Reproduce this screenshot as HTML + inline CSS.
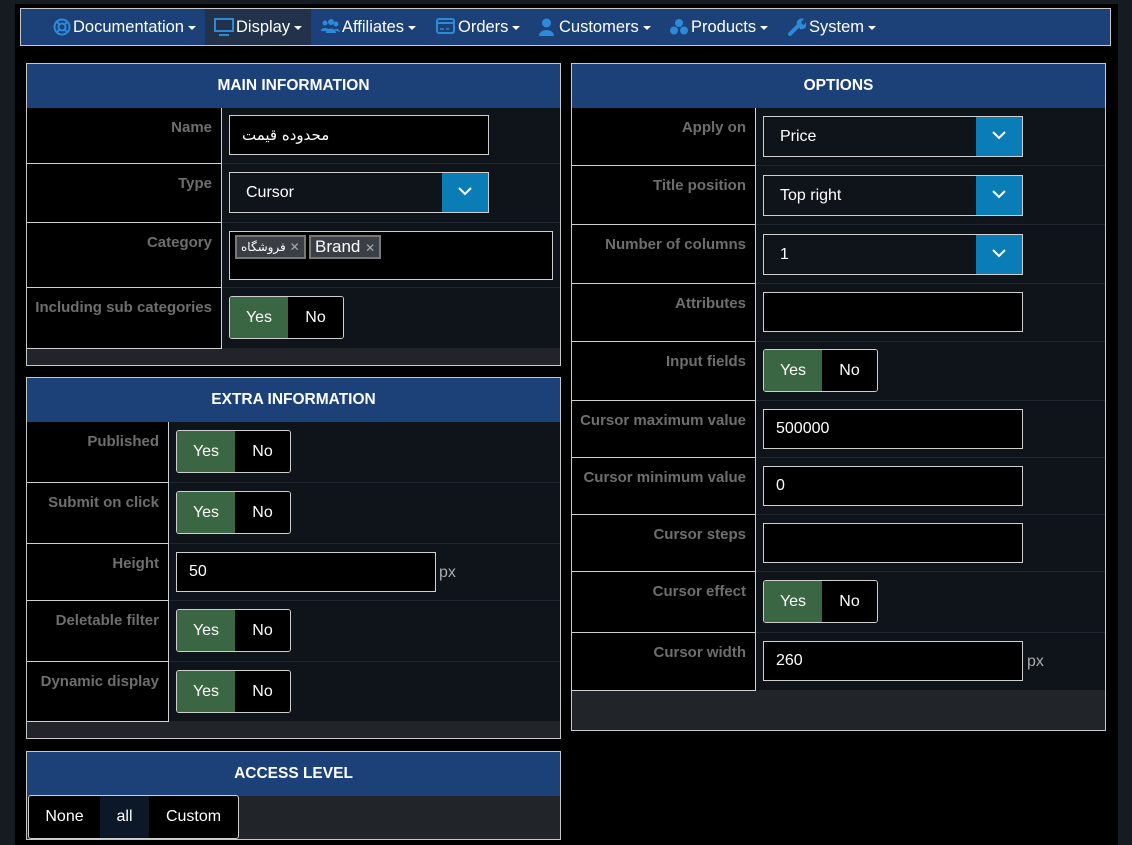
<!DOCTYPE html>
<html><head><meta charset="utf-8"><style>
*{box-sizing:border-box;margin:0;padding:0}
body{width:1132px;height:845px;background:#000;font-family:"Liberation Sans","Noto Sans CJK SC",sans-serif;color:#fff;position:relative;overflow:hidden;font-size:16px}
.a{position:absolute}
.strip{background:#161a21}
.nav{left:20px;top:8px;width:1091px;height:38px;background:#1b4178;border:1px solid #c8c8c8}
.ni{position:absolute;top:0;height:36px;line-height:36px;font-size:16.5px;white-space:nowrap}
.car{display:inline-block;width:0;height:0;border-left:4px solid transparent;border-right:4px solid transparent;border-top:4px solid #fff;vertical-align:middle;margin-left:4px}
.ic{position:absolute;top:9px}
.panel{border:1px solid #c8c8c8;background:#212429}
.hd{position:absolute;left:0;right:0;top:0;height:44px;background:#1b4178;text-align:center;line-height:44px;font-weight:bold;font-size:15.5px}
.lab{position:absolute;left:0;background:#000;border-right:1px solid #d0d0d0;border-bottom:1px solid #d0d0d0;color:#6e6e6e;font-weight:bold;font-size:15px;text-align:right;padding:11px 9px 0 0}
.val{position:absolute;right:0;background:#0f141b;border-bottom:1px solid #1f2630}
.in{position:absolute;background:#000;border:1px solid #cfcfcf;height:40px;line-height:38px;padding-left:12px;font-size:16px}
.sel{position:absolute;background:#0f141b;border:1px solid #cfcfcf;height:41px;line-height:39px;padding-left:16px;font-size:16px}
.sel .b{position:absolute;right:0;top:0;width:46px;height:39px;background:#0a7db6}
.sel .b svg{position:absolute;left:16px;top:14px}
.tg{position:absolute;height:43px;border:1px solid #cfcfcf;border-radius:3px;overflow:hidden;display:flex;width:115px}
.tg span{display:block;height:41px;line-height:41px;text-align:center;font-size:16px}
.tg .y{width:58px;background:#3a6644}
.tg .n{width:55px;background:#000}
.px{position:absolute;color:#aaa;font-size:16px}
</style></head><body>
<div class="a strip" style="left:0;top:0;width:15px;height:845px"></div>
<div class="a strip" style="left:1118px;top:0;width:14px;height:845px"></div>
<div class="a strip" style="left:0;top:0;width:1132px;height:4px"></div>

<div class="a nav">
 <div class="ni" style="left:184px;width:106px;background:#22324a"></div>
 <svg class="ic" style="left:32px" width="18" height="18" viewBox="0 0 18 18"><circle cx="9" cy="9" r="7.5" fill="none" stroke="#2d8ad8" stroke-width="2"/><circle cx="9" cy="9" r="3.5" fill="none" stroke="#2d8ad8" stroke-width="2"/><path d="M4 4l3 3M14 4l-3 3M4 14l3-3M14 14l-3-3" stroke="#2d8ad8" stroke-width="2"/></svg>
 <div class="ni" style="left:52px">Documentation<span class="car"></span></div>
 <svg class="ic" style="left:193px" width="20" height="18" viewBox="0 0 20 18"><rect x="1" y="1" width="18" height="12" fill="none" stroke="#2d8ad8" stroke-width="2"/><path d="M5 17h10" stroke="#2d8ad8" stroke-width="2"/></svg>
 <div class="ni" style="left:215px">Display<span class="car"></span></div>
 <svg class="ic" style="left:299px" width="21" height="18" viewBox="0 0 21 18"><circle cx="5" cy="5" r="2.5" fill="#2d8ad8"/><circle cx="11" cy="4" r="3" fill="#2d8ad8"/><circle cx="16" cy="6" r="2.5" fill="#2d8ad8"/><path d="M1 13c0-4 8-4 8 0zM6 15c0-6 10-6 10 0zM14 12c2-2 6-1 6 2z" fill="#2d8ad8"/></svg>
 <div class="ni" style="left:321px">Affiliates<span class="car"></span></div>
 <svg class="ic" style="left:415px" width="19" height="16" viewBox="0 0 19 16"><rect x="1" y="1" width="17" height="14" rx="2" fill="none" stroke="#2d8ad8" stroke-width="2"/><path d="M1 5h17" stroke="#2d8ad8" stroke-width="2"/><path d="M4 11h4M10 11h3" stroke="#2d8ad8" stroke-width="1.5"/></svg>
 <div class="ni" style="left:437px">Orders<span class="car"></span></div>
 <svg class="ic" style="left:518px" width="15" height="18" viewBox="0 0 15 18"><circle cx="7.5" cy="5" r="4.5" fill="#2d8ad8"/><path d="M0 18c0-8 15-8 15 0z" fill="#2d8ad8"/></svg>
 <div class="ni" style="left:538px">Customers<span class="car"></span></div>
 <svg class="ic" style="left:648px" width="20" height="18" viewBox="0 0 20 18"><circle cx="10" cy="5" r="4" fill="#2d8ad8"/><circle cx="5" cy="12.5" r="4" fill="#2d8ad8"/><circle cx="15" cy="12.5" r="4" fill="#2d8ad8"/></svg>
 <div class="ni" style="left:670px">Products<span class="car"></span></div>
 <svg class="ic" style="left:767px" width="18" height="18" viewBox="0 0 18 18"><path d="M2 16l8-8" stroke="#2d8ad8" stroke-width="4" stroke-linecap="round"/><path d="M9 7a5 5 0 0 1 7-6l-3 3 1 2 2 1 2-3a5 5 0 0 1-6 7z" fill="#2d8ad8"/></svg>
 <div class="ni" style="left:788px">System<span class="car"></span></div>
</div>

<!-- MAIN INFORMATION -->
<div class="a panel" style="left:26px;top:63px;width:535px;height:303px">
 <div class="hd">MAIN INFORMATION</div>
 <div class="lab" style="top:44px;width:195px;height:56px">Name</div><div class="val" style="top:44px;left:195px;height:56px"></div>
 <div class="lab" style="top:100px;width:195px;height:59px">Type</div><div class="val" style="top:100px;left:195px;height:59px"></div>
 <div class="lab" style="top:159px;width:195px;height:65px">Category</div><div class="val" style="top:159px;left:195px;height:65px"></div>
 <div class="lab" style="top:224px;width:195px;height:61px">Including sub categories</div><div class="val" style="top:224px;left:195px;height:60px;border:none"></div>
 <div class="in" style="left:202px;top:51px;width:260px;font-family:'DejaVu Sans',sans-serif;font-size:15px">محدوده قیمت</div>
 <div class="sel" style="left:202px;top:108px;width:260px">Cursor<div class="b"><svg width="14" height="9"><path d="M1 1l6 6 6-6" stroke="#fff" stroke-width="2" fill="none"/></svg></div></div>
 <div class="in" style="left:202px;top:167px;width:324px;height:49px;padding:0">
  <span class="a" style="left:5px;top:3px;height:24px;line-height:20px;padding:0 4px;background:#3a3f45;border:2px solid #777;font-size:12px;font-family:'DejaVu Sans',sans-serif">فروشگاه <span style="color:#aaa">✕</span></span>
  <span class="a" style="left:79px;top:3px;height:24px;line-height:20px;padding:0 4px;background:#3a3f45;border:2px solid #777;font-size:17px">Brand <span style="color:#aaa;font-size:12px">✕</span></span>
 </div>
 <div class="tg" style="left:202px;top:232px"><span class="y">Yes</span><span class="n">No</span></div>
</div>

<!-- EXTRA INFORMATION -->
<div class="a panel" style="left:26px;top:377px;width:535px;height:362px">
 <div class="hd">EXTRA INFORMATION</div>
 <div class="lab" style="top:44px;width:142px;height:61px">Published</div><div class="val" style="top:44px;left:142px;height:61px"></div>
 <div class="lab" style="top:105px;width:142px;height:61px">Submit on click</div><div class="val" style="top:105px;left:142px;height:61px"></div>
 <div class="lab" style="top:166px;width:142px;height:57px">Height</div><div class="val" style="top:166px;left:142px;height:57px"></div>
 <div class="lab" style="top:223px;width:142px;height:61px">Deletable filter</div><div class="val" style="top:223px;left:142px;height:61px"></div>
 <div class="lab" style="top:284px;width:142px;height:60px">Dynamic display</div><div class="val" style="top:284px;left:142px;height:59px;border:none"></div>
 <div class="tg" style="left:149px;top:52px"><span class="y">Yes</span><span class="n">No</span></div>
 <div class="tg" style="left:149px;top:113px"><span class="y">Yes</span><span class="n">No</span></div>
 <div class="in" style="left:149px;top:174px;width:260px">50</div><div class="px" style="left:412px;top:186px">px</div>
 <div class="tg" style="left:149px;top:231px"><span class="y">Yes</span><span class="n">No</span></div>
 <div class="tg" style="left:149px;top:292px"><span class="y">Yes</span><span class="n">No</span></div>
</div>

<!-- ACCESS LEVEL -->
<div class="a panel" style="left:26px;top:751px;width:535px;height:89px">
 <div class="hd">ACCESS LEVEL</div>
 <div class="a" style="left:1px;top:43px;width:211px;height:44px;border:1px solid #cfcfcf;border-radius:3px;display:flex;overflow:hidden;background:#000">
  <span style="width:71px;text-align:center;line-height:42px">None</span>
  <span style="width:49px;text-align:center;line-height:42px;background:#0c1828">all</span>
  <span style="width:89px;text-align:center;line-height:42px">Custom</span>
 </div>
</div>

<!-- OPTIONS -->
<div class="a panel" style="left:571px;top:63px;width:535px;height:668px">
 <div class="hd">OPTIONS</div>
 <div class="lab" style="top:44px;width:184px;height:58px">Apply on</div><div class="val" style="top:44px;left:184px;height:58px"></div>
 <div class="lab" style="top:102px;width:184px;height:59px">Title position</div><div class="val" style="top:102px;left:184px;height:59px"></div>
 <div class="lab" style="top:161px;width:184px;height:59px">Number of columns</div><div class="val" style="top:161px;left:184px;height:59px"></div>
 <div class="lab" style="top:220px;width:184px;height:58px">Attributes</div><div class="val" style="top:220px;left:184px;height:58px"></div>
 <div class="lab" style="top:278px;width:184px;height:59px">Input fields</div><div class="val" style="top:278px;left:184px;height:59px"></div>
 <div class="lab" style="top:337px;width:184px;height:57px">Cursor maximum value</div><div class="val" style="top:337px;left:184px;height:57px"></div>
 <div class="lab" style="top:394px;width:184px;height:57px">Cursor minimum value</div><div class="val" style="top:394px;left:184px;height:57px"></div>
 <div class="lab" style="top:451px;width:184px;height:57px">Cursor steps</div><div class="val" style="top:451px;left:184px;height:57px"></div>
 <div class="lab" style="top:508px;width:184px;height:61px">Cursor effect</div><div class="val" style="top:508px;left:184px;height:61px"></div>
 <div class="lab" style="top:569px;width:184px;height:58px">Cursor width</div><div class="val" style="top:569px;left:184px;height:57px;border:none"></div>
 <div class="sel" style="left:191px;top:52px;width:260px">Price<div class="b"><svg width="14" height="9"><path d="M1 1l6 6 6-6" stroke="#fff" stroke-width="2" fill="none"/></svg></div></div>
 <div class="sel" style="left:191px;top:111px;width:260px">Top right<div class="b"><svg width="14" height="9"><path d="M1 1l6 6 6-6" stroke="#fff" stroke-width="2" fill="none"/></svg></div></div>
 <div class="sel" style="left:191px;top:170px;width:260px">1<div class="b"><svg width="14" height="9"><path d="M1 1l6 6 6-6" stroke="#fff" stroke-width="2" fill="none"/></svg></div></div>
 <div class="in" style="left:191px;top:228px;width:260px"></div>
 <div class="tg" style="left:191px;top:285px"><span class="y">Yes</span><span class="n">No</span></div>
 <div class="in" style="left:191px;top:345px;width:260px">500000</div>
 <div class="in" style="left:191px;top:402px;width:260px">0</div>
 <div class="in" style="left:191px;top:459px;width:260px"></div>
 <div class="tg" style="left:191px;top:516px"><span class="y">Yes</span><span class="n">No</span></div>
 <div class="in" style="left:191px;top:577px;width:260px">260</div><div class="px" style="left:455px;top:589px">px</div>
</div>
</body></html>
